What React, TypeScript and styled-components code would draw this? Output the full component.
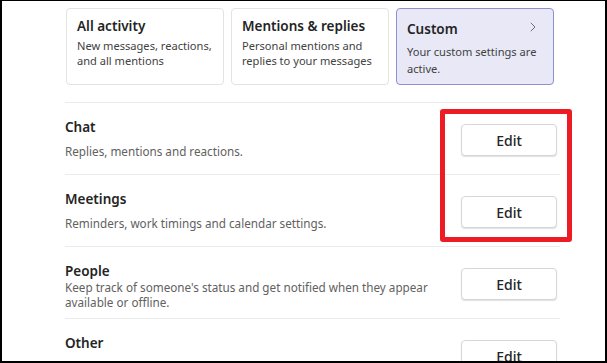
import styled, { createGlobalStyle } from "styled-components";

const GlobalStyle = createGlobalStyle`
  html, body {
    margin: 0;
    padding: 0;
    background: #fff;
  }
  body {
    font-family: "Noto Sans", "Open Sans", sans-serif;
    color: #242424;
  }
`;

type CardProps = {
  $active?: boolean;
};

const Frame = styled.div`
  position: relative;
  width: 607px;
  height: 363px;
  box-sizing: border-box;
  border: 2px solid #000;
  border-top-width: 1px;
  overflow: hidden;
  background: #fff;
`;

const Content = styled.div`
  width: 495px;
  margin-left: 63px;
  display: flex;
  flex-direction: column;
`;

const CardRow = styled.div`
  display: flex;
  gap: 7px;
  padding: 7px 0 0 1px;
  margin-bottom: 17px;
`;

const Card = styled.div<CardProps>`
  position: relative;
  width: 158px;
  height: 77px;
  box-sizing: border-box;
  padding: ${(p) => (p.$active ? "11px 4px 0 10px" : "8px 3px 0 10px")};
  border: 1px solid ${(p) => (p.$active ? "#8e90d3" : "#e3e3e3")};
  border-radius: 4px;
  background: ${(p) => (p.$active ? "#e8e8f6" : "#fff")};
  display: flex;
  flex-direction: column;
  gap: ${(p) => (p.$active ? "5px" : "3px")};
`;

const CardTitle = styled.div`
  font-size: 13.5px;
  font-weight: 600;
  line-height: 18px;
  color: #242424;
`;

const CardText = styled.div<CardProps>`
  font-size: 11.1px;
  line-height: ${(p) => (p.$active ? "17px" : "15px")};
  color: #424242;
`;

const Chevron = styled.svg`
  position: absolute;
  top: 13px;
  right: 17px;
`;

const Row = styled.div`
  height: 72px;
  box-sizing: border-box;
  border-top: 1px solid #ebebeb;
  padding: 15px 3px 0 0;
  display: flex;
  align-items: flex-start;
  justify-content: space-between;
`;

const RowText = styled.div`
  display: flex;
  flex-direction: column;
  max-width: 372px;
`;

const RowTitle = styled.div`
  font-size: 13.5px;
  font-weight: 600;
  line-height: 18px;
  color: #242424;
`;

const RowDesc = styled.div<{ $offset: number }>`
  margin-top: ${(p) => p.$offset}px;
  font-size: 11.7px;
  line-height: 15px;
  color: #616161;
`;

const EditButton = styled.button`
  width: 96px;
  height: 32px;
  margin-top: 6px;
  border: 1px solid #d6d6d6;
  border-radius: 4px;
  background: #fff;
  box-shadow: 0 1px 1px rgba(0, 0, 0, 0.12);
  font-family: inherit;
  font-size: 14px;
  font-weight: 500;
  color: #242424;
  cursor: pointer;
`;

const Highlight = styled.div`
  position: absolute;
  left: 438px;
  top: 108px;
  width: 132px;
  height: 133px;
  box-sizing: border-box;
  border: 5px solid #ed1c24;
  border-radius: 3px;
  pointer-events: none;
`;

const modes = [
  { title: "All activity", text: "New messages, reactions, and all mentions" },
  { title: "Mentions & replies", text: "Personal mentions and replies to your messages" },
  { title: "Custom", text: "Your custom settings are active.", active: true },
];

const sections = [
  { title: "Chat", desc: "Replies, mentions and reactions.", offset: 8 },
  { title: "Meetings", desc: "Reminders, work timings and calendar settings.", offset: 8 },
  {
    title: "People",
    desc: "Keep track of someone's status and get notified when they appear available or offline.",
    offset: 0,
  },
  { title: "Other", desc: "", offset: 0 },
];

export default function App() {
  return (
    <>
      <GlobalStyle />
      <Frame>
        <Content>
          <CardRow>
            {modes.map((m) => (
              <Card key={m.title} $active={m.active}>
                <CardTitle>{m.title}</CardTitle>
                <CardText $active={m.active}>{m.text}</CardText>
                {m.active && (
                  <Chevron width="6" height="10" viewBox="0 0 6 10">
                    <path d="M0.8 0.8 L5 5 L0.8 9.2" fill="none" stroke="#616161" strokeWidth="0.9" />
                  </Chevron>
                )}
              </Card>
            ))}
          </CardRow>
          {sections.map((s) => (
            <Row key={s.title}>
              <RowText>
                <RowTitle>{s.title}</RowTitle>
                {s.desc && <RowDesc $offset={s.offset}>{s.desc}</RowDesc>}
              </RowText>
              <EditButton>Edit</EditButton>
            </Row>
          ))}
        </Content>
        <Highlight />
      </Frame>
    </>
  );
}
